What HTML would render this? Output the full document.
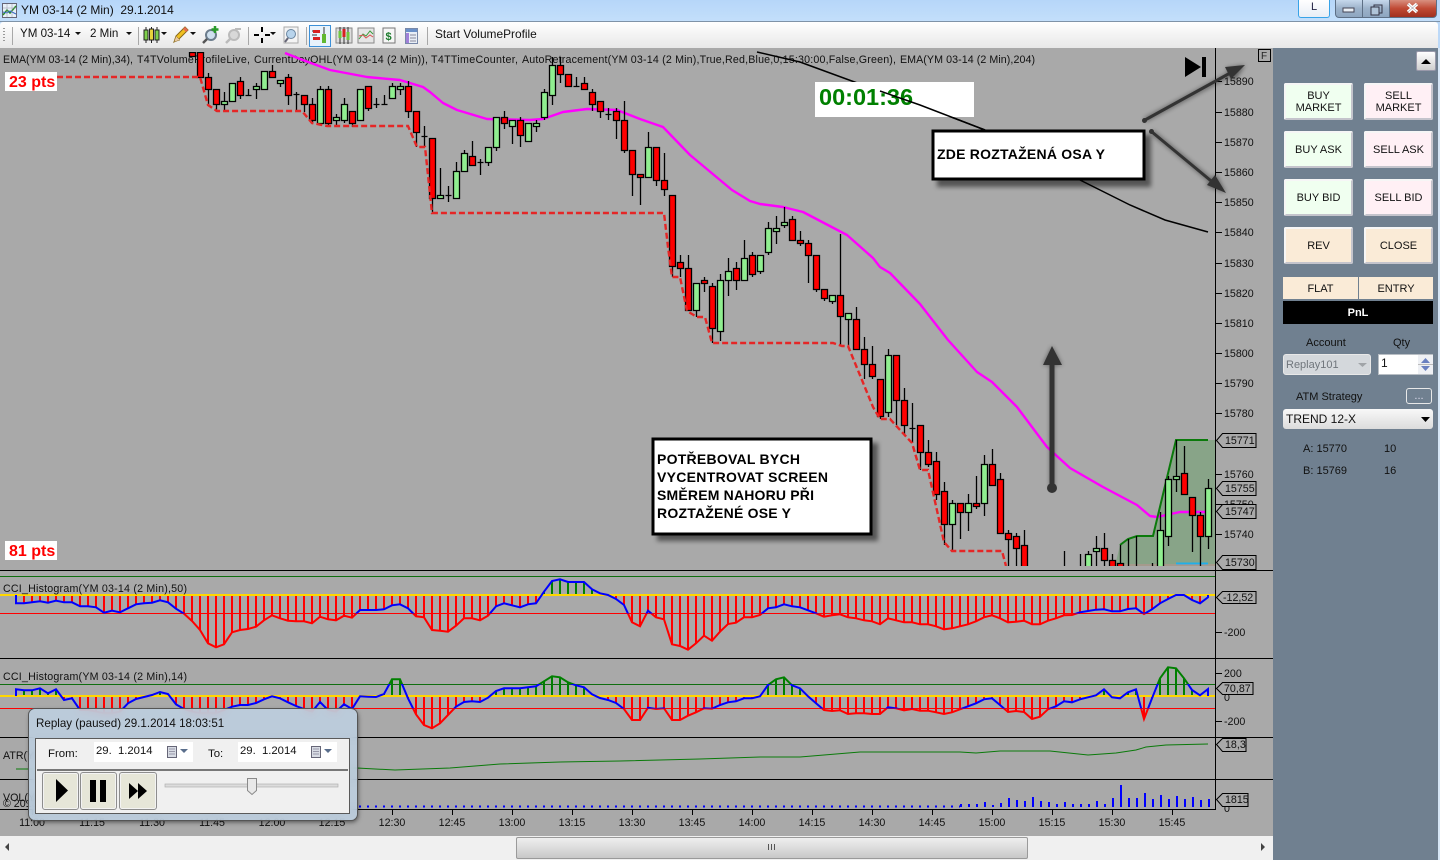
<!DOCTYPE html>
<html><head><meta charset="utf-8"><title>YM 03-14 (2 Min) 29.1.2014</title>
<style>
html,body{margin:0;padding:0;width:1440px;height:860px;overflow:hidden;background:#bcd9f8;font-family:"Liberation Sans",sans-serif;color:#111}
.a{position:absolute;box-sizing:border-box}
.t{position:absolute;white-space:pre;font-size:12px;color:#111}
#title{left:0;top:0;width:1440px;height:22px;background:linear-gradient(#b6d6f9,#c3dffb);border-bottom:1px solid #7f93a8}
#tb{left:0;top:22px;width:1438px;height:26px;background:linear-gradient(#fff,#f3f3f3 50%,#e8e8e8);border-radius:3px 3px 0 0}
.sep{position:absolute;top:27px;width:1px;height:18px;background:#a8a8a8}
.wb{position:absolute;top:0;height:18px;box-sizing:border-box;border:1px solid #5d6f85;border-top:0}
.btn{position:absolute;box-sizing:border-box;width:69px;height:37px;border:2px solid #f6f6f6;border-right-color:#c4c4cc;border-bottom-color:#c4c4cc;border-radius:2px;display:flex;align-items:center;justify-content:center;text-align:center;font-size:11px;line-height:12px;color:#111}
.buy{background:#f0fff0}.sell{background:#fff0f5}.neu{background:#faebd7}
.lb{position:absolute;font-size:11px;color:#111;white-space:pre}
#panel{left:1273px;top:48px;width:165px;height:812px;background:#708090}
#dlg{left:29px;top:709px;width:328px;height:111px;border-radius:6px;background:rgba(190,208,226,.86);backdrop-filter:blur(4px);box-shadow:0 0 0 1px #555,1px 2px 5px rgba(0,0,0,.55)}
.rb{position:absolute;box-sizing:border-box;top:772px;height:38px;background:#e6e6d8;border:1px solid #8d8d8d;border-radius:3px;box-shadow:inset 0 0 0 1px #f3f3f3}
.date{position:absolute;box-sizing:border-box;top:742px;height:20px;width:99px;background:#fff;font-size:11.3px;padding:3px 0 0 2px;color:#111;white-space:pre}
</style></head><body>

<div class="a" id="title"></div>
<svg class="a" style="left:2px;top:3px" width="15" height="15" viewBox="0 0 15 15"><rect x=".5" y=".5" width="14" height="14" fill="#e8f1f8" stroke="#667"/><path d="M1 12 5 7l3 3 6-7" fill="none" stroke="#2b8a2b" stroke-width="1.5"/><path d="M1 9l4 1 3-2 6 3" fill="none" stroke="#3569c4"/><path d="M5 1v13M10 1v13M1 5h13" stroke="#99a" stroke-width=".5"/></svg>
<div class="t" style="left:21px;top:3px">YM 03-14 (2 Min)&nbsp;&nbsp;29.1.2014</div>
<div class="a" style="left:1298px;top:0;width:32px;height:18px;background:linear-gradient(#fff,#e8eef6);border:1px solid #38a3e8;border-top:0;border-radius:0 0 3px 3px;font-size:11px;text-align:center;line-height:15px;color:#224">L</div>
<div class="wb" style="left:1335px;width:28px;border-radius:0 0 0 4px;background:linear-gradient(#c6d8ec,#9cb2ca 50%,#8ea6c0)"></div>
<div class="wb" style="left:1362px;width:28px;background:linear-gradient(#c6d8ec,#9cb2ca 50%,#8ea6c0)"></div>
<div class="wb" style="left:1389px;width:48px;border-radius:0 0 4px 0;background:linear-gradient(#d89080,#c04a34 50%,#a03020)"></div>
<svg class="a" style="left:1335px;top:0" width="103" height="18"><rect x="8" y="8" width="11" height="4" fill="#e8eef4" stroke="#445"/><rect x="39" y="5" width="8" height="8" fill="none" stroke="#334"/><rect x="36" y="7" width="8" height="8" fill="#b0c4d8" stroke="#334"/><path d="M73 4l9 8M82 4l-9 8" stroke="#fff" stroke-width="3.4"/><path d="M73 4l9 8M82 4l-9 8" stroke="#556" stroke-width=".4"/></svg>

<div class="a" id="tb"></div>
<svg class="a" style="left:0;top:22px" width="450" height="26" viewBox="0 22 450 26">
<path d="M4 28v1M4 31v1M4 34v1M4 37v1M4 40v1" stroke="#999" stroke-width="2"/>
<path d="M75 32h6l-3 3zM126 32h6l-3 3zM161 32h6l-3 3zM190 32h6l-3 3zM270 32h6l-3 3z" fill="#111"/>
<g stroke="#222"><path d="M146 27v16M151.500 27v16M157 27v16"/><rect x="144" y="30" width="4" height="10" fill="#7fd04b"/><rect x="149.500" y="29" width="4" height="11" fill="#e8d23c"/><rect x="155" y="30" width="4" height="10" fill="#7fd04b"/></g>
<path d="M174 42l2-6 9-9 3 3-9 9z" fill="#f0c020" stroke="#886818"/><path d="M174 42l2-6 4 4z" fill="#e8c8a0" stroke="#886818" stroke-width=".5"/><path d="M185 27l3 3-2 2-3-3z" fill="#e46a50"/>
<circle cx="211" cy="35" r="5" fill="#cfe0ee" stroke="#6c7c8c" stroke-width="2"/><path d="M207 39l-4 4" stroke="#555" stroke-width="2.500"/><path d="M215 26v7M211.500 29.500h7" stroke="#2a9a2a" stroke-width="2.500"/>
<circle cx="234" cy="35" r="5" fill="#d8d8d8" stroke="#bbb" stroke-width="2"/><path d="M230 39l-4 4" stroke="#bbb" stroke-width="2.500"/><path d="M235 29h6" stroke="#bbb" stroke-width="2"/>
<path d="M262 27v5M262 38v5M254 35h5M265 35h5" stroke="#000" stroke-width="2"/>
<rect x="284" y="27" width="14" height="16" fill="#f4f4f4" stroke="#aaa"/><circle cx="291" cy="34" r="4.500" fill="#b8d4ec" stroke="#6a86a0"/><path d="M288 38l-3 4" stroke="#667" stroke-width="2"/>
<rect x="309.500" y="25.500" width="21" height="21" fill="#e8f3fc" stroke="#3c90d8"/><path d="M312 31h7M312 35h5M324 27v16" stroke="#333"/><rect x="313" y="30" width="7" height="3" fill="#d82020"/><rect x="313" y="37" width="7" height="3" fill="#d82020"/><rect x="322" y="34" width="4" height="9" fill="#60b830"/>
<rect x="336" y="28" width="16" height="15" fill="#ddd" stroke="#888"/><path d="M340 27v17M344 27v17M348 27v17" stroke="#333"/><rect x="338.500" y="31" width="3" height="7" fill="#70c840"/><rect x="342.500" y="29" width="3" height="8" fill="#d82020"/><rect x="346.500" y="32" width="3" height="8" fill="#70c840"/>
<rect x="358" y="28" width="16" height="15" fill="#e6e6e6" stroke="#888"/><path d="M359 39l4-5 3 2 4-5 3 3" fill="none" stroke="#3a9a3a"/><path d="M359 36l4-1 3 3 4-3 3 2" fill="none" stroke="#d85050"/>
<rect x="383" y="28" width="12" height="15" fill="#f6f6f6" stroke="#777"/><text x="385.500" y="40" font-size="11" font-weight="bold" fill="#1b7a2b" font-family="Liberation Sans">$</text>
<rect x="405.500" y="28.500" width="12" height="15" fill="#e8eef6" stroke="#7888a8"/><rect x="406" y="29" width="11" height="3" fill="#6a90c8"/><rect x="406" y="33" width="3" height="10" fill="#a080d8"/><path d="M410 35h6M410 38h6M410 41h6" stroke="#889"/>
</svg>
<div class="sep" style="left:12px"></div><div class="sep" style="left:138px"></div><div class="sep" style="left:248px"></div><div class="sep" style="left:306px"></div><div class="sep" style="left:427px"></div>
<div class="t" style="left:20px;top:27px;font-size:11.6px">YM 03-14</div><div class="t" style="left:90px;top:27px;font-size:11.6px">2 Min</div><div class="t" style="left:435px;top:27px;font-size:11.9px">Start VolumeProfile</div>

<svg class="a" style="left:0;top:0" width="1440" height="860" viewBox="0 0 1440 860" font-family="Liberation Sans" font-size="10.67">
<defs>
<clipPath id="cc"><rect x="0" y="52" width="1215" height="514"/></clipPath>
<clipPath id="pa"><rect x="0" y="48" width="1215" height="522"/></clipPath>
<clipPath id="c1a"><rect x="0" y="571" width="1215" height="24"/></clipPath>
<clipPath id="c1b"><rect x="0" y="595" width="1215" height="63"/></clipPath>
<clipPath id="c1u"><rect x="0" y="571" width="1215" height="42.500"/></clipPath>
<clipPath id="c1d"><rect x="0" y="613.500" width="1215" height="45"/></clipPath>
<clipPath id="c2a"><rect x="0" y="659" width="1215" height="37"/></clipPath>
<clipPath id="c2b"><rect x="0" y="696" width="1215" height="41"/></clipPath>
<clipPath id="c2g"><rect x="0" y="659" width="1215" height="25"/></clipPath>
<clipPath id="c2u"><rect x="0" y="684" width="1215" height="24.500"/></clipPath>
<clipPath id="c2d"><rect x="0" y="708.500" width="1215" height="29"/></clipPath>
<pattern id="pr" patternUnits="userSpaceOnUse" x="15" y="0" width="8" height="8"><rect width="2" height="8" fill="#ff0000"/></pattern>
<pattern id="pg" patternUnits="userSpaceOnUse" x="15" y="0" width="8" height="8"><rect width="2" height="8" fill="#008000"/></pattern>
<polyline id="l1" points="16,595 16,603.3 24,603.3 32,602.3 40,601.3 48,602.7 56,600.7 64,602.3 72,602.3 80,606.3 88,606.3 96,607.3 104,612.7 112,610.7 120,612.3 128,608.3 136,604.3 144,603.3 152,602.7 160,600.3 168,602.3 176,608.7 184,613.7 192,621 200,630 208,643.3 216,647.3 224,644.3 232,632.3 240,630 248,629 256,626.7 264,620.3 272,615.3 280,618.3 288,620.7 296,621.3 304,621.3 312,623.3 320,616.7 328,619.3 336,620.3 344,615.7 352,617.7 360,610 368,610 376,610 384,609.3 392,605.3 400,604.3 408,608.3 416,616.3 424,617.3 432,630 440,630.7 448,631.7 456,625.7 464,618.3 472,618.3 480,620.3 488,615.7 496,606.3 504,603.3 512,605.3 520,607.3 528,604.3 536,603.3 544,591.7 552,581 560,579.3 568,582 576,582 584,582 592,589.3 600,593.3 608,595 616,599 624,605 632,622.3 640,626.3 648,610.7 656,617.3 664,619.3 672,644.3 680,646 688,649.7 696,643.3 704,635.7 712,640.7 720,631.7 728,624 736,622.7 744,617.3 752,617.3 760,615 768,608.3 776,607.3 784,604.3 792,606.3 800,607.3 808,610.3 816,613.3 824,616.7 832,615.3 840,614.3 848,617.3 856,618.3 864,620.3 872,621.3 880,624.3 888,618.3 896,620.3 904,622.3 912,622.3 920,624.3 928,624.3 936,626.3 944,629.3 952,628.3 960,626.3 968,624.3 976,621.3 984,617.3 992,615.3 1000,618.3 1008,622.3 1016,621.7 1024,620.7 1032,624.3 1040,624.3 1048,620.7 1056,618.3 1064,615.3 1072,615 1080,612.3 1088,611 1096,609.7 1104,609.3 1112,611.3 1120,611.3 1128,609 1136,608.3 1144,614 1152,609.3 1160,603.3 1168,599 1176,595 1184,595 1192,600 1200,603.3 1208,597.3 1208,595"/>
<polyline id="l2" points="16,696 16,689.3 24,690.3 32,690.3 40,688.3 48,693.3 56,689.3 64,700 72,698.3 80,710 88,710 96,711.7 104,713.3 112,713.3 120,711.7 128,703.3 136,699 144,697 152,695 160,692 168,694 176,704.3 184,709 192,711.7 200,713.3 208,713.3 216,713.3 224,710 232,706.7 240,705 248,705 256,703 264,699.3 272,696.3 280,698.3 288,702.3 296,706 304,709 312,711.7 320,702 328,710 336,711.7 344,704.3 352,709 360,696.3 368,696.7 376,697 384,694 392,679.3 400,679.3 408,698.3 416,714.3 424,725 432,728.3 440,723.3 448,715 456,706.7 464,702 472,701.3 480,702 488,697.7 496,691 504,688.3 512,688.3 520,688.3 528,687.3 536,686.3 544,681.3 552,676.3 560,677.3 568,682.3 576,685.3 584,687.3 592,694.3 600,698 608,700 616,703 624,709 632,720 640,720 648,707.7 656,709 664,708.3 672,720 680,720 688,715.7 696,712.3 704,708.3 712,708.7 720,705 728,702.3 736,701.3 744,698.3 752,698.3 760,696.3 768,685 776,679.3 784,677.3 792,685.3 800,688.3 808,696.3 816,703.3 824,710 832,711 840,710.3 848,714 856,713.3 864,713.3 872,714 880,714 888,707.3 896,708.3 904,710.3 912,709 920,710.7 928,710.7 936,712.3 944,714 952,712.3 960,709.3 968,706.3 976,703.3 984,699.3 992,698.3 1000,705 1008,712 1016,711 1024,712 1032,719 1040,716.7 1048,709.3 1056,706.3 1064,701.3 1072,702.3 1080,699.3 1088,697.3 1096,695.3 1104,689.3 1112,697.3 1120,698.3 1128,692.3 1136,689.3 1144,719 1152,698.3 1160,678.3 1168,667.3 1176,668.3 1184,678.3 1192,690 1200,695.3 1208,689 1208,696"/>
<filter id="sh" x="-30%" y="-30%" width="160%" height="160%"><feGaussianBlur stdDeviation="2.500"/></filter>
</defs>

<rect x="0" y="48" width="1273" height="788" fill="#a9a9a9"/>

<!-- value area -->
<polygon points="1115,566 1120,545 1128,539 1137,536 1153,536 1176,440 1215,440 1215,566" fill="#88a488"/>
<path d="M1115 565H1215" stroke="#c09090"/>

<g fill="#111">
<text x="3" y="63" textLength="130">EMA(YM 03-14 (2 Min),34),</text>
<text x="137" y="63" textLength="113">T4TVolumeProfileLive,</text>
<text x="254" y="63" textLength="174">CurrentDayOHL(YM 03-14 (2 Min)),</text>
<text x="431" y="63" textLength="87">T4TTimeCounter,</text>
<text x="522" y="63" textLength="374">AutoRetracement(YM 03-14 (2 Min),True,Red,Blue,0,15:30:00,False,Green),</text>
<text x="900" y="63" textLength="135">EMA(YM 03-14 (2 Min),204)</text>
</g>

<polyline clip-path="url(#pa)" fill="none" stroke="#ff00ff" stroke-width="2.400" stroke-linejoin="round" points="285,53 300,59 330,70 367,77 400,80 423,87 430,92 443,103 457,110 487,119 530,120 543,119 563,112 587,109 617,110 640,119 663,127 690,155 732,190 750,201 760,204 783,207 803,212 847,235 873,258 880,267 890,273 920,304 948,340 977,372 992,382 1017,407 1047,447 1070,468 1103,487 1137,505 1150,516 1157,517 1180,512 1205,512"/>

<path clip-path="url(#cc)" d="M1120 545L1128 539L1137 536H1153L1176 440H1208" fill="none" stroke="#0b7a0b" stroke-width="2"/>
<path d="M1176 563.500H1208" stroke="#20b0e8" stroke-width="2"/>

<g clip-path="url(#cc)">
<path fill="none" stroke="#000" stroke-width="1.300" d="M208.500 73V105M216.500 89V112M224.500 92V112M240.500 77V99M248.500 89V95M245.500 95.500h6M256.500 83V99M272.500 65V77M280.500 80V87M288.500 74V105M296.500 92V112M293.500 94.500h6M304.500 95V112M312.500 98V123M320.500 86V124M328.500 86V127M336.500 114V127M344.500 98V123M352.500 111V127M368.500 86V111M376.500 98V108M373.500 104.500h6M384.500 95V104M381.500 104.500h6M392.500 83V98M400.500 83V95M408.500 81V118M416.500 111V147M424.500 126V147M421.500 136.500h6M432.500 138V213M440.500 168V198M448.500 186V202M445.500 195.500h6M456.500 162V198M464.500 150V171M472.500 141V165M480.500 159V175M477.500 162.500h6M488.500 147V166M496.500 117V151M504.500 111V129M512.500 120V144M520.500 117V147M536.500 120V132M544.500 89V120M552.500 57V105M560.500 57V83M576.500 77V86M573.500 86.500h6M584.500 77V89M592.500 89V111M600.500 101V118M608.500 108V120M605.500 114.500h6M616.500 108V139M624.500 101V153M632.500 150V196M640.500 174V205M648.500 132V177M656.500 147V186M664.500 153V196M672.500 195V277M680.500 255V277M688.500 255V310M696.500 283V317M704.500 277V292M712.500 283V343M720.500 274V341M728.500 258V296M736.500 262V290M744.500 240V280M752.500 252V277M760.500 255V274M768.500 222V255M776.500 216V244M784.500 207V228M792.500 216V240M800.500 231V246M808.500 240V283M816.500 255V292M824.500 289V301M832.500 295V304M840.500 234V346M848.500 313V346M856.500 307V350M864.500 337V379M872.500 346V379M880.500 379V419M888.500 349V417M896.500 355V425M904.500 388V434M912.500 403V443M909.500 428.500h6M920.500 425V470M928.500 440V467M936.500 452V500M944.500 482V545M952.500 500V552M960.500 503V539M968.500 494V531M976.500 476V509M984.500 455V516M992.500 449V485M1000.500 473V533M1008.500 530V566M1016.500 533V566M1024.500 530V566M1064.500 551V566M1080.500 554V566M1088.500 551V566M1096.500 536V566M1104.500 533V566M1112.500 554V566M1120.500 545V566M1128.500 539V566M1136.500 536V566M1152.500 563V566M1160.500 512V566M1168.500 476V546M1176.500 440V492M1184.500 446V494M1192.500 497V552M1200.500 512V566M1208.500 479V549"/>
<path fill="#ff0000" stroke="#000" stroke-width="1.300" d="M189.500 52.500h6V56.500h-6zM197.500 52.500h6V77.500h-6zM205.500 77.500h6V89.500h-6zM213.500 89.500h6V104.500h-6zM237.500 81.500h6V95.500h-6zM269.500 71.500h6V77.500h-6zM285.500 77.500h6V95.500h-6zM301.500 95.500h6V104.500h-6zM309.500 104.500h6V120.500h-6zM325.500 89.500h6V123.500h-6zM349.500 111.500h6V123.500h-6zM365.500 86.500h6V108.500h-6zM405.500 86.500h6V111.500h-6zM413.500 111.500h6V132.500h-6zM429.500 138.500h6V198.500h-6zM469.500 156.500h6V165.500h-6zM501.500 117.500h6V123.500h-6zM517.500 120.500h6V135.500h-6zM557.500 65.500h6V74.500h-6zM565.500 74.500h6V86.500h-6zM581.500 83.500h6V89.500h-6zM589.500 92.500h6V104.500h-6zM597.500 101.500h6V111.500h-6zM613.500 111.500h6V120.500h-6zM621.500 120.500h6V150.500h-6zM629.500 150.500h6V174.500h-6zM637.500 174.500h6V177.500h-6zM653.500 147.500h6V180.500h-6zM661.500 180.500h6V189.500h-6zM669.500 195.500h6V266.500h-6zM677.500 262.500h6V268.500h-6zM685.500 268.500h6V310.500h-6zM701.500 280.500h6V283.500h-6zM709.500 286.500h6V328.500h-6zM733.500 268.500h6V280.500h-6zM749.500 255.500h6V274.500h-6zM789.500 219.500h6V240.500h-6zM797.500 240.500h6V243.500h-6zM805.500 243.500h6V255.500h-6zM813.500 255.500h6V289.500h-6zM821.500 289.500h6V298.500h-6zM837.500 295.500h6V316.500h-6zM853.500 319.500h6V349.500h-6zM861.500 349.500h6V364.500h-6zM869.500 364.500h6V376.500h-6zM877.500 379.500h6V416.500h-6zM893.500 355.500h6V400.500h-6zM901.500 400.500h6V425.500h-6zM917.500 425.500h6V452.500h-6zM925.500 452.500h6V464.500h-6zM933.500 461.500h6V494.500h-6zM941.500 491.500h6V524.500h-6zM957.500 503.500h6V512.500h-6zM973.500 503.500h6V506.500h-6zM989.500 464.500h6V485.500h-6zM997.500 479.500h6V533.500h-6zM1005.500 533.500h6V539.500h-6zM1013.500 536.500h6V548.500h-6zM1021.500 545.500h6V570h-6zM1101.500 548.500h6V560.500h-6zM1109.500 560.500h6V570h-6zM1117.500 563.500h6V570h-6zM1181.500 473.500h6V494.500h-6zM1189.500 497.500h6V515.500h-6zM1197.500 515.500h6V536.500h-6z"/>
<path fill="#90ee90" stroke="#000" stroke-width="1.300" d="M221.500 101.500h6V104.500h-6zM229.500 83.500h6V101.500h-6zM253.500 86.500h6V89.500h-6zM261.500 71.500h6V89.500h-6zM277.500 80.500h6V83.500h-6zM317.500 89.500h6V123.500h-6zM333.500 117.500h6V120.500h-6zM341.500 104.500h6V120.500h-6zM357.500 89.500h6V120.500h-6zM389.500 86.500h6V98.500h-6zM397.500 86.500h6V89.500h-6zM437.500 195.500h6V198.500h-6zM453.500 171.500h6V198.500h-6zM461.500 153.500h6V171.500h-6zM485.500 147.500h6V162.500h-6zM493.500 117.500h6V147.500h-6zM509.500 120.500h6V126.500h-6zM525.500 123.500h6V141.500h-6zM533.500 123.500h6V126.500h-6zM541.500 92.500h6V117.500h-6zM549.500 65.500h6V95.500h-6zM645.500 147.500h6V177.500h-6zM693.500 283.500h6V310.500h-6zM717.500 280.500h6V331.500h-6zM725.500 271.500h6V280.500h-6zM741.500 258.500h6V280.500h-6zM757.500 255.500h6V271.500h-6zM765.500 228.500h6V252.500h-6zM773.500 228.500h6V231.500h-6zM781.500 222.500h6V225.500h-6zM829.500 295.500h6V301.500h-6zM845.500 313.500h6V319.500h-6zM885.500 355.500h6V412.500h-6zM949.500 503.500h6V524.500h-6zM965.500 503.500h6V512.500h-6zM981.500 464.500h6V503.500h-6zM1085.500 554.500h6V570h-6zM1093.500 548.500h6V551.500h-6zM1157.500 530.500h6V570h-6zM1165.500 479.500h6V536.500h-6zM1173.500 476.500h6V479.500h-6zM1205.500 488.500h6V536.500h-6z"/>
<polyline fill="none" stroke="#e52626" stroke-width="2.400" stroke-dasharray="6 3" points="57,77 200,77 208,105 217,111 302,111 312,123 327,126 408,126 417,147 425,147 432,213 664,213 668,247 672,277 680,277 687,311 697,317 705,317 712,343 833,343 842,346 848,346 873,407 880,419 890,419 912,443 920,470 928,470 944,542 952,551 1002,551 1006,566"/>
</g>

<polyline fill="none" stroke="#000" stroke-width="1.500" points="757,52 800,62 860,84 920,105 985,130"/>

<!-- separators & axes -->
<path d="M0 570.500H1273M0 658.500H1273M0 737.500H1273M0 779.500H1273M0 809.500H1216M1215.500 48V809" stroke="#000" fill="none"/>

<!-- pane 1 -->
<use href="#l1" fill="url(#pg)" clip-path="url(#c1a)"/><use href="#l1" fill="url(#pr)" clip-path="url(#c1b)"/>
<path d="M0 576.500H1215" fill="none" stroke="#0f6e0f"/><path d="M0 613.500H1215" stroke="#ff0000"/>
<path d="M0 595H1215" stroke="#ffd700" stroke-width="2"/>
<use href="#l1" fill="none" stroke="#0000ff" stroke-width="2" clip-path="url(#c1u)"/><use href="#l1" fill="none" stroke="#ff0000" stroke-width="2" clip-path="url(#c1d)"/>
<text x="3" y="592" fill="#111" textLength="184">CCI_Histogram(YM 03-14 (2 Min),50)</text>

<!-- pane 2 -->
<use href="#l2" fill="url(#pg)" clip-path="url(#c2a)"/><use href="#l2" fill="url(#pr)" clip-path="url(#c2b)"/>
<path d="M0 684.500H1215" stroke="#0f6e0f"/><path d="M0 708.500H1215" stroke="#ff0000"/>
<path d="M0 696H1215" stroke="#ffd700" stroke-width="2"/>
<use href="#l2" fill="none" stroke="#008000" stroke-width="2" clip-path="url(#c2g)"/><use href="#l2" fill="none" stroke="#0000ff" stroke-width="2" clip-path="url(#c2u)"/><use href="#l2" fill="none" stroke="#ff0000" stroke-width="2" clip-path="url(#c2d)"/>
<text x="3" y="680" fill="#111" textLength="184">CCI_Histogram(YM 03-14 (2 Min),14)</text>

<!-- pane 3 -->
<text x="3" y="759" fill="#111">ATR(YM 03-14 (2 Min),14)</text>
<polyline fill="none" stroke="#0a7a0a" points="16,769 30,769 357,768 395,770 450,768 500,764 560,762 620,761 700,759 760,757 800,757 860,752 900,752 960,752 976,753 1000,751 1050,751 1088,755 1116,753 1136,750 1146,747 1166,745 1208,744"/>

<!-- pane 4 -->
<text x="3" y="801" fill="#111">VOL(YM 03-14 (2 Min))</text>
<text x="3" y="807" fill="#111">© 2013 NinjaTrader</text>
<path d="M359 806.500H960" stroke="#0000ff" stroke-width="2" stroke-dasharray="2 6"/>
<path d="M961 807V804M969 807V804M977 807V804M985 807V802M993 807V805M1001 807V803M1009 807V798M1017 807V800M1025 807V801M1033 807V797M1041 807V801M1049 807V802M1057 807V804M1065 807V802M1073 807V804M1081 807V804M1089 807V804M1097 807V801M1105 807V804M1113 807V798M1121 807V785M1129 807V798M1137 807V798M1145 807V793M1153 807V799M1161 807V795M1169 807V799M1177 807V796M1185 807V799M1193 807V797M1201 807V800M1209 807V799" stroke="#0000ff" stroke-width="2" fill="none"/>

<!-- time axis -->
<path d="M32.500 809v6M92.500 809v6M152.500 809v6M212.500 809v6M272.500 809v6M332.500 809v6M392.500 809v6M452.500 809v6M512.500 809v6M572.500 809v6M632.500 809v6M692.500 809v6M752.500 809v6M812.500 809v6M872.500 809v6M932.500 809v6M992.500 809v6M1052.500 809v6M1112.500 809v6M1172.500 809v6" stroke="#000"/>
<g fill="#111" text-anchor="middle"><text x="32" y="826">11:00</text><text x="92" y="826">11:15</text><text x="152" y="826">11:30</text><text x="212" y="826">11:45</text><text x="272" y="826">12:00</text><text x="332" y="826">12:15</text><text x="392" y="826">12:30</text><text x="452" y="826">12:45</text><text x="512" y="826">13:00</text><text x="572" y="826">13:15</text><text x="632" y="826">13:30</text><text x="692" y="826">13:45</text><text x="752" y="826">14:00</text><text x="812" y="826">14:15</text><text x="872" y="826">14:30</text><text x="932" y="826">14:45</text><text x="992" y="826">15:00</text><text x="1052" y="826">15:15</text><text x="1112" y="826">15:30</text><text x="1172" y="826">15:45</text></g>

<!-- y axis -->
<path d="M1216 81.500h6M1216 112.500h6M1216 142.500h6M1216 172.500h6M1216 202.500h6M1216 232.500h6M1216 263.500h6M1216 293.500h6M1216 323.500h6M1216 353.500h6M1216 383.500h6M1216 413.500h6M1216 474.500h6M1216 504.500h6M1216 534.500h6M1216 632.500h6M1216 673.500h6M1216 721.500h6" stroke="#000"/>
<g fill="#111"><text x="1224" y="85">15890</text><text x="1224" y="116">15880</text><text x="1224" y="146">15870</text><text x="1224" y="176">15860</text><text x="1224" y="206">15850</text><text x="1224" y="236">15840</text><text x="1224" y="267">15830</text><text x="1224" y="297">15820</text><text x="1224" y="327">15810</text><text x="1224" y="357">15800</text><text x="1224" y="387">15790</text><text x="1224" y="417">15780</text><text x="1224" y="478">15760</text><text x="1224" y="508">15750</text><text x="1224" y="538">15740</text><text x="1224" y="636">-200</text><text x="1224" y="677">200</text><text x="1224" y="701">0</text><text x="1224" y="725">-200</text><text x="1224" y="812">0</text></g>
<g fill="#a9a9a9" stroke="#000">
<path d="M1216.500 440.500l6-7H1256v14h-33.500z"/><path d="M1216.500 488.500l6-7H1256v14h-33.500z"/><path d="M1216.500 511.500l6-7H1256v14h-33.500z"/><path d="M1216.500 562.500l6-7H1256v14h-33.500z"/>
<path d="M1216.500 597.500l6-6H1256v12h-33.500z"/><path d="M1216.500 688.500l6-6H1253v12h-30.500z"/><path d="M1216.500 744.500l6-6H1246v13h-23.500z"/><path d="M1216.500 799.500l6-6H1248v13h-25.500z"/>
</g>
<g fill="#111"><text x="1225" y="444">15771</text><text x="1225" y="492">15755</text><text x="1225" y="515">15747</text><text x="1225" y="566">15730</text><text x="1223" y="601">-12,52</text><text x="1224" y="692">70,87</text><text x="1225" y="748">18,3</text><text x="1225" y="803">1815</text></g>

<!-- F box -->
<rect x="1258.500" y="49.500" width="12" height="12" fill="#a9a9a9" stroke="#000"/><text x="1261" y="59" fill="#222" font-size="10">F</text>

<!-- pts labels -->
<rect x="5" y="72" width="52" height="19" fill="#fff"/><text x="9" y="87" fill="#ff0000" font-size="16" font-weight="bold">23 pts</text>
<rect x="5" y="541" width="52" height="19" fill="#fff"/><text x="9" y="556" fill="#ff0000" font-size="16" font-weight="bold">81 pts</text>

<!-- timer -->
<rect x="815" y="82" width="159" height="35" fill="#fff"/>
<text x="819" y="105" fill="#008000" font-size="23.500" font-weight="bold">00:01:36</text>
<polyline fill="none" stroke="#000" stroke-width="1.500" points="880,91 920,105 985,130"/>
<polyline fill="none" stroke="#000" stroke-width="1.500" points="1080,180 1130,205 1165,220 1208,232"/>

<!-- skip icon -->
<path d="M1185 57L1201 67L1185 77z" fill="#000"/><rect x="1202" y="57" width="4" height="20" fill="#000"/>

<!-- arrows -->
<g filter="url(#sh)" opacity=".45"><path d="M1145 120L1238 70M1152 132L1220 188M1052 488V360" stroke="#000" stroke-width="4" fill="none"/><path d="M1245 65L1234 82L1226 68zM1226 193L1206 186L1216 174zM1052 346L1043 365H1062z"/></g>
<g fill="#333" stroke="#333"><path d="M1145 120L1232 72M1152 132L1216 185" stroke-width="3" fill="none"/><path d="M1245 65L1231 79L1225 67zM1226 193L1207 185L1215 175z" stroke="none"/>
<path d="M1052 488V362" stroke-width="5" fill="none"/><path d="M1052 346L1043 365H1062z" stroke="none"/><circle cx="1052" cy="488" r="5" stroke="none"/><circle cx="1144.500" cy="120.500" r="2.500" stroke="none"/><circle cx="1151.500" cy="131.500" r="2.500" stroke="none"/></g>

<!-- note boxes -->
<rect x="937" y="135" width="214" height="52" fill="#000" filter="url(#sh)" opacity=".5"/>
<rect x="933" y="131" width="211" height="48" fill="#fff" stroke="#000" stroke-width="3"/>
<text x="937" y="159" fill="#000" font-size="14" font-weight="bold" textLength="168">ZDE ROZTAŽENÁ OSA Y</text>
<rect x="657" y="443" width="221" height="98" fill="#000" filter="url(#sh)" opacity=".5"/>
<rect x="653" y="439" width="218" height="95" fill="#fff" stroke="#000" stroke-width="3"/>
<g fill="#000" font-size="14" font-weight="bold"><text x="657" y="464" textLength="143">POTŘEBOVAL BYCH</text><text x="657" y="482" textLength="171">VYCENTROVAT SCREEN</text><text x="657" y="500" textLength="157">SMĚREM NAHORU PŘI</text><text x="657" y="518" textLength="134">ROZTAŽENÉ OSE Y</text></g>
</svg>

<!-- bottom scrollbar -->
<div class="a" style="left:0;top:836px;width:1273px;height:24px;background:#f0f0f0"></div>
<div class="a" style="left:516px;top:837px;width:512px;height:22px;background:linear-gradient(#efefef,#dcdcdc 50%,#c8c8c8);border:1px solid #9a9a9a;border-radius:2px"></div>
<svg class="a" style="left:0;top:836px" width="1273" height="24"><path d="M5 11l4-4v8z" fill="#444"/><path d="M1261 7l4 4-4 4z" fill="#444"/><path d="M768.500 8v6M771.500 8v6M774.500 8v6" stroke="#555"/></svg>

<!-- side panel -->
<div class="a" id="panel"></div>
<div class="a" style="left:1438px;top:48px;width:2px;height:812px;background:#d6e6f6"></div>
<div class="a" style="left:1416px;top:51px;width:20px;height:20px;background:linear-gradient(#fff,#cfcfcf);border-radius:2px;border:1px solid #99a"></div>
<svg class="a" style="left:1416px;top:51px" width="20" height="20"><path d="M5 13h10l-5-5z" fill="#000"/></svg>
<div class="btn buy" style="left:1284px;top:83px">BUY<br>MARKET</div><div class="btn sell" style="left:1364px;top:83px">SELL<br>MARKET</div>
<div class="btn buy" style="left:1284px;top:131px">BUY ASK</div><div class="btn sell" style="left:1364px;top:131px">SELL ASK</div>
<div class="btn buy" style="left:1284px;top:179px">BUY BID</div><div class="btn sell" style="left:1364px;top:179px">SELL BID</div>
<div class="btn neu" style="left:1284px;top:227px">REV</div><div class="btn neu" style="left:1364px;top:227px">CLOSE</div>
<div class="a" style="left:1283px;top:277px;width:75px;height:22px;background:#faebd7;font-size:11px;text-align:center;line-height:24px">FLAT</div>
<div class="a" style="left:1359px;top:277px;width:74px;height:22px;background:#faebd7;font-size:11px;text-align:center;line-height:24px">ENTRY</div>
<div class="a" style="left:1283px;top:301px;width:150px;height:23px;background:#000;color:#fff;font-size:11px;font-weight:bold;text-align:center;line-height:24px">PnL</div>
<div class="lb" style="left:1306px;top:337px">Account</div><div class="lb" style="left:1393px;top:337px">Qty</div>
<div class="a" style="left:1283px;top:354px;width:88px;height:21px;background:#d4d8dc;border:1px solid #e8e8e8;border-radius:3px;font-size:11px;color:#70767c;padding:4px 0 0 2px">Replay101</div>
<svg class="a" style="left:1283px;top:354px" width="88" height="21"><path d="M75 9h9l-4.500 4z" fill="#a0a4a8"/></svg>
<div class="a" style="left:1378px;top:354px;width:55px;height:21px;background:#e8ecf0;border:1px solid #b8bec4"></div>
<div class="a" style="left:1379px;top:355px;width:39px;height:19px;background:#fff;font-size:12px;padding:1px 0 0 2px">1</div>
<svg class="a" style="left:1418px;top:355px" width="15" height="19"><rect width="15" height="19" fill="#eef0f4"/><path d="M3 8h9L7.500 3z" fill="#6a80c0"/><path d="M3 11h9l-4.500 5z" fill="#6a80c0"/><path d="M0 9.500h15" stroke="#bbb"/></svg>
<div class="lb" style="left:1296px;top:391px">ATM Strategy</div>
<div class="a" style="left:1406px;top:388px;width:26px;height:16px;background:#708090;border:1.500px solid #e8e8e8;border-radius:3px;font-size:11px;text-align:center;line-height:14px;color:#dde">...</div>
<div class="a" style="left:1283px;top:409px;width:150px;height:20px;background:linear-gradient(#f8f8f8,#dcdcdc);border-radius:3px;font-size:12px;padding:3px 0 0 3px">TREND 12-X</div>
<svg class="a" style="left:1283px;top:409px" width="150" height="20"><path d="M138 8h9l-4.500 5z" fill="#000"/></svg>
<div class="lb" style="left:1303px;top:443px">A: 15770</div><div class="lb" style="left:1384px;top:443px">10</div>
<div class="lb" style="left:1303px;top:465px">B: 15769</div><div class="lb" style="left:1384px;top:465px">16</div>

<!-- replay dialog -->
<div class="a" id="dlg"></div>
<div class="t" style="left:36px;top:717px;font-size:11.6px">Replay (paused) 29.1.2014 18:03:51</div>
<div class="a" style="left:35px;top:738px;width:315px;height:76px;background:#f0f0f0;border:1px solid #5a5a5a"></div>
<div class="t" style="left:48px;top:748px;font-size:11.4px">From:</div><div class="t" style="left:208px;top:748px;font-size:11.4px">To:</div>
<div class="date" style="left:94px">29.  1.2014</div><div class="date" style="left:238px">29.  1.2014</div>
<svg class="a" style="left:94px;top:742px" width="250" height="20"><g><rect x="73.500" y="4.500" width="9" height="11" fill="#d8dce4" stroke="#667"/><path d="M75 7h6M75 9.500h6M75 12h6" stroke="#99a"/><path d="M86 7h8l-4 4z" fill="#5a6e8c"/></g><g transform="translate(144 0)"><rect x="73.500" y="4.500" width="9" height="11" fill="#d8dce4" stroke="#667"/><path d="M75 7h6M75 9.500h6M75 12h6" stroke="#99a"/><path d="M86 7h8l-4 4z" fill="#5a6e8c"/></g></svg>
<div class="a" style="left:37px;top:769px;width:311px;height:2px;background:#777"></div>
<div class="rb" style="left:42px;width:37px"></div><div class="rb" style="left:80px;width:37px"></div><div class="rb" style="left:119px;width:38px"></div>
<svg class="a" style="left:0;top:770px" width="360" height="45"><path d="M56 9L68 20.500L56 32z" fill="#000"/><rect x="90" y="10" width="6" height="22" fill="#000"/><rect x="100" y="10" width="6" height="22" fill="#000"/><path d="M129 13l9 8-9 8zM138 13l9 8-9 8z" fill="#000"/><rect x="165" y="14" width="173" height="3" fill="#dcdcdc" stroke="#b0b0b0" stroke-width=".7"/><path d="M247.500 8.500h9v12l-4.500 4-4.500-4z" fill="#e8e8e8" stroke="#8a8a8a"/></svg>

</body></html>
